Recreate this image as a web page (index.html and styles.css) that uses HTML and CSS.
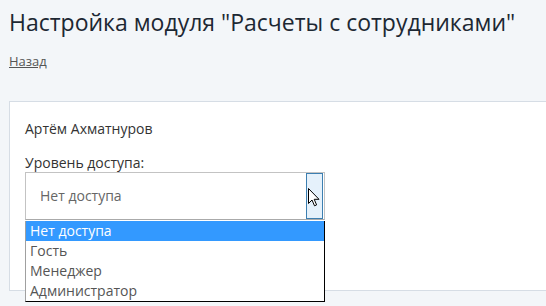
FILE: index.html
```html
<!DOCTYPE html>
<html lang="ru">
<head>
<meta charset="utf-8">
<title>Настройка модуля</title>
<link rel="stylesheet" href="styles.css">
</head>
<body>
<div class="page">
  <h1 class="title">Настройка модуля "Расчеты с сотрудниками"</h1>
  <a class="back" href="#">Назад</a>
  <div class="panel">
    <div class="name">Артём Ахматнуров</div>
    <div class="label">Уровень доступа:</div>
    <div class="select-wrap">
      <div class="select">
        <span class="select-value">Нет доступа</span>
        <span class="select-btn">
          <svg class="cursor" width="12" height="19" viewBox="0 0 12 19">
            <path d="M0.5 0.5 L0.5 15.5 L4 12 L6.5 17.8 L8.6 16.9 L6.2 11.3 L11 11.3 Z" fill="#fff" stroke="#000" stroke-width="1" stroke-linejoin="miter"/>
          </svg>
        </span>
      </div>
      <ul class="options">
        <li class="option selected">Нет доступа</li>
        <li class="option">Гость</li>
        <li class="option">Менеджер</li>
        <li class="option">Администратор</li>
      </ul>
    </div>
  </div>
  <div class="next"></div>
</div>
</body>
</html>
```

FILE: styles.css
```css
html, body {
  margin: 0;
  padding: 0;
}
body {
  background: #f3f6f9;
  font-family: "Open Sans", "Noto Sans", sans-serif;
  overflow: hidden;
}
.page {
  padding-left: 9px;
}
.title {
  margin: 6px 0 0;
  font-size: 23px;
  font-weight: 400;
  line-height: 32px;
  color: #1d2833;
  white-space: nowrap;
}
.back {
  display: inline-block;
  margin-top: 14px;
  font-size: 13px;
  line-height: 18px;
  color: #555;
  text-decoration: underline;
}
.panel {
  margin-top: 30px;
  background: #fff;
  border: 1px solid #d6dde5;
  border-right: none;
  padding: 18px 0 70px 15px;
}
.name {
  font-size: 14px;
  line-height: 18px;
  color: #333;
}
.label {
  margin-top: 16px;
  font-size: 14px;
  line-height: 18px;
  color: #333;
}
.select-wrap {
  position: relative;
  width: 300px;
}
.select {
  box-sizing: border-box;
  height: 48px;
  border: 1px solid #c3c3c3;
  border-bottom-color: #aaa;
  display: flex;
  align-items: stretch;
  justify-content: space-between;
  background: #fff;
}
.select-value {
  padding-left: 14px;
  font-size: 14px;
  line-height: 46px;
  color: #666;
}
.select-btn {
  box-sizing: border-box;
  width: 17px;
  margin-right: 1px;
  background: #e5f1fb;
  border: 1px solid #3c7fb1;
  position: relative;
}
.cursor {
  position: absolute;
  left: 1px;
  top: 14px;
}
.options {
  position: absolute;
  left: 0;
  top: 49px;
  width: 300px;
  box-sizing: border-box;
  margin: 0;
  padding: 0;
  list-style: none;
  background: #fff;
  border: 1px solid #000;
  border-left-color: #a0a0a0;
  border-top: none;
}
.option {
  height: 20px;
  line-height: 20px;
  padding-left: 4px;
  font-size: 14px;
  color: #555;
}
.option.selected {
  background: #3399ff;
  color: #fff;
}
.next {
  margin-top: 15px;
  border-top: 1px solid #d6dde5;
  height: 0;
}
```
